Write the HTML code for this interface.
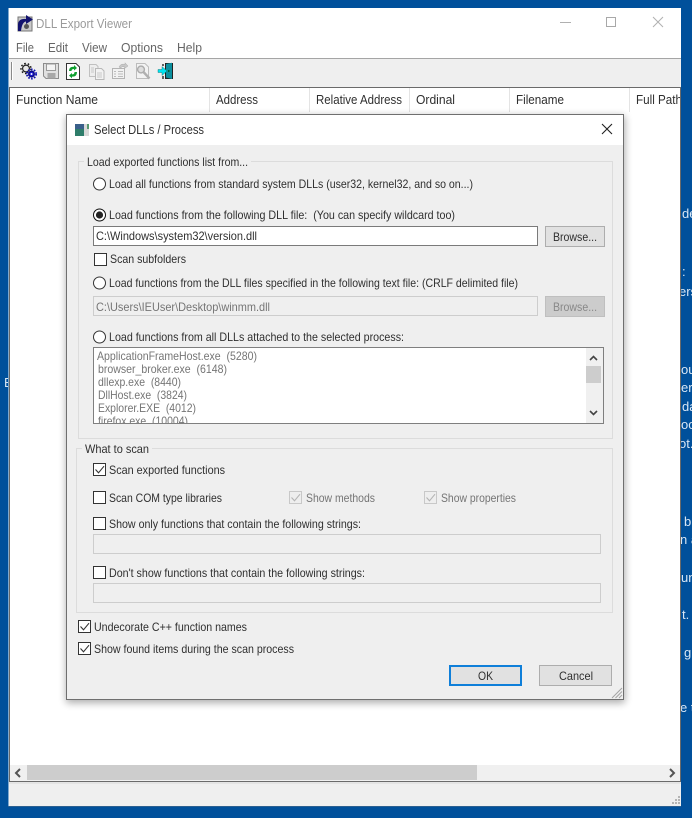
<!DOCTYPE html>
<html><head><meta charset="utf-8"><title>DLL Export Viewer</title>
<style>
html,body{margin:0;padding:0;background:#00509b;width:692px;height:818px;overflow:hidden}
svg{display:block}
text{font-family:"Liberation Sans",sans-serif;font-size:12px;white-space:pre;fill:#2f2f2f}
.g{fill:#757575}
.w{fill:#d8e6f4;font-size:13px}
.m{fill:#666;font-size:12.5px}
.box{fill:#fff;stroke:#333;stroke-width:1}
.dis{fill:#eee;stroke:#c8c8c8;stroke-width:1}
.ed{fill:#efefef;stroke:#cdcdcd;stroke-width:1}
.sep{stroke:#e4e4e4;stroke-width:1}
</style></head><body>
<svg width="692" height="818" viewBox="0 0 692 818" xmlns="http://www.w3.org/2000/svg">
<defs>
<filter id="sh" x="-10%" y="-10%" width="120%" height="120%"><feGaussianBlur stdDeviation="4"/></filter>
<clipPath id="lc"><rect x="94" y="348" width="492" height="75"/></clipPath>
<clipPath id="hc"><rect x="9" y="88" width="671" height="24"/></clipPath>
<clipPath id="rc"><rect x="681" y="0" width="11" height="818"/></clipPath>
<clipPath id="lf"><rect x="0" y="0" width="8" height="818"/></clipPath>
<path id="ck" d="M2.5 6.5 L5.5 9.8 L11 3.2" fill="none"/>
</defs>

<rect width="692" height="818" fill="#00509b"/>
<!-- bg fragments -->
<g clip-path="url(#rc)">
<text class="w" x="682" y="218">de</text>
<text class="w" x="682" y="276">:</text>
<text class="w" x="679" y="296">ers</text>
<text class="w" x="681" y="374">ou</text>
<text class="w" x="681" y="392">er</text>
<text class="w" x="682" y="411">da</text>
<text class="w" x="681" y="429">oo</text>
<text class="w" x="679" y="448">ot.</text>
<text class="w" x="684" y="526">b</text>
<text class="w" x="680" y="544">n a</text>
<text class="w" x="681" y="582">un</text>
<text class="w" x="682" y="619">t.</text>
<text class="w" x="684" y="657">g</text>
<text class="w" x="680" y="712">e t</text>
</g>
<g clip-path="url(#lf)"><text class="w" x="4" y="387">E</text></g>

<!-- window -->
<rect x="8.5" y="8" width="672.5" height="798.5" fill="#fff"/>
<rect x="9" y="58" width="672" height="1" fill="#a5a5a5"/>
<rect x="9" y="59" width="672" height="28" fill="#efefef"/>
<rect x="9" y="87" width="672" height="1" fill="#6a6a6a"/>
<rect x="680" y="87" width="1" height="694" fill="#6a6a6a"/>
<rect x="9" y="87" width="1" height="694" fill="#6a6a6a"/>
<rect x="9" y="781" width="672" height="25" fill="#efefef"/>
<rect x="9" y="781" width="672" height="1" fill="#6a6a6a"/>
<rect x="9" y="782" width="672" height="2" fill="#e4e4e4"/>
<rect x="8" y="806" width="673" height="1" fill="#2b5f90"/>

<!-- app icon -->
<g>
<rect x="18" y="17" width="14" height="14" fill="#c9c9c9" stroke="#777" stroke-width="1"/>
<path d="M18 31 L18 24 Q19 18 26 19 L26 15 L33 19.5 L26 24 L26 21.5 Q22 22 21 31 Z" fill="#12126e"/>
<circle cx="26.5" cy="26.5" r="2.5" fill="#555"/>
</g>
<text x="36" y="28" textLength="96" lengthAdjust="spacingAndGlyphs" style="fill:#9a9a9a;font-size:12.5px">DLL Export Viewer</text>

<!-- window controls -->
<rect x="560" y="22" width="11" height="1" fill="#b0b0b0"/>
<rect x="606.5" y="17.5" width="9" height="9" fill="none" stroke="#a8a8a8"/>
<path d="M653 17 L663 27 M663 17 L653 27" stroke="#b0b0b0" stroke-width="1" fill="none"/>

<!-- menu -->
<text class="m" x="16" y="52" textLength="18" lengthAdjust="spacingAndGlyphs">File</text>
<text class="m" x="48" y="52" textLength="20" lengthAdjust="spacingAndGlyphs">Edit</text>
<text class="m" x="82" y="52" textLength="25" lengthAdjust="spacingAndGlyphs">View</text>
<text class="m" x="121" y="52" textLength="42" lengthAdjust="spacingAndGlyphs">Options</text>
<text class="m" x="177" y="52" textLength="25" lengthAdjust="spacingAndGlyphs">Help</text>

<!-- toolbar -->
<rect x="11" y="62" width="1" height="18" fill="#8a8a8a"/>
<rect x="12" y="62" width="1" height="18" fill="#fff"/>
<!-- gears -->
<circle cx="26" cy="68.5" r="3.4" fill="#e8e8e8" stroke="#222" stroke-width="1.2"/>
<circle cx="26" cy="68.5" r="5" fill="none" stroke="#111" stroke-width="1.4" stroke-dasharray="1.6 2"/>
<circle cx="31.5" cy="74" r="2.8" fill="#1a1ad0" stroke="#0a0a80" stroke-width="1.4"/>
<circle cx="31.5" cy="74" r="4.6" fill="none" stroke="#1010b0" stroke-width="1.8" stroke-dasharray="1.6 1.4"/>
<circle cx="31.5" cy="74" r="1" fill="#fff"/>
<!-- floppy -->
<path d="M43.5 63.5 H58.5 V78.5 H46 L43.5 76 Z" fill="#e0e0e0" stroke="#8c8c8c"/>
<rect x="46.5" y="64" width="9" height="6.5" fill="#f4f4f4" stroke="#9a9a9a"/>
<rect x="47.5" y="73" width="8" height="5.5" fill="#a8a8a8"/>
<!-- refresh doc -->
<path d="M66.5 63.5 H76 L79.5 67 V79.5 H66.5 Z" fill="#fff" stroke="#333"/>
<path d="M69 71 Q69 66.5 74 66.8 L74 65 L77 68 L74 70.5 L74 69 Q71.5 69 71.5 71 Z" fill="#10a030"/>
<path d="M77 72 Q77 77 72 76.6 L72 78.4 L69 75.5 L72 73 L72 74.4 Q74.5 74.5 74.5 72 Z" fill="#10a030"/>
<!-- copy -->
<path d="M89.5 64.5 H96 L98 66.5 V76.5 H89.5 Z" fill="#eee" stroke="#c0c0c0"/>
<path d="M95.5 68.5 H101.5 L104 71 V79.5 H95.5 Z" fill="#f2f2f2" stroke="#b8b8b8"/>
<path d="M97 73 H102 M97 75 H102 M97 77 H102 M91 68 H94 M91 70 H94 M91 72 H94" stroke="#c8c8c8"/>
<!-- properties -->
<rect x="112.5" y="68.5" width="12" height="10" fill="#f2f2f2" stroke="#b4b4b4"/>
<path d="M114 71.5 H116 M118 71.5 H123 M114 74 H116 M118 74 H123 M114 76.5 H116 M118 76.5 H123" stroke="#bcbcbc"/>
<path d="M119 67 Q121 63 125 64.5 L125 62.8 L128 66 L124.5 68.5 L124.5 66.8 Q122 66 120.5 68 Z" fill="#c8c8c8" stroke="#aaa" stroke-width=".5"/>
<!-- search doc -->
<path d="M136.5 63.5 H145 L148.5 67 V78.5 H136.5 Z" fill="#f2f2f2" stroke="#bcbcbc"/>
<circle cx="141" cy="69.5" r="3.4" fill="#ddd" stroke="#ababab" stroke-width="1.4"/>
<path d="M143.5 72 L149.5 78.5" stroke="#b0b0b0" stroke-width="2.4"/>
<!-- exit -->
<rect x="165" y="63" width="8" height="16" fill="#222"/>
<path d="M166 64 L172 62.8 V79 L166 77.5 Z" fill="#0c8f9e"/>
<rect x="168" y="70" width="1.5" height="2" fill="#063"/>
<path d="M158 69.5 H162 V66.5 L167 71 L162 75.5 V72.5 H158 Z" fill="#00e4f0" stroke="#066" stroke-width=".4"/>
<path d="M163 64 V66 M163 76 V79" stroke="#222" stroke-width="1.4"/>

<!-- header -->
<g clip-path="url(#hc)">
<path class="sep" d="M209.5 88V112M309.5 88V112M409.5 88V112M509.5 88V112M629.5 88V112"/>
<text x="16" y="104" textLength="82" lengthAdjust="spacingAndGlyphs" style="font-size:12.5px">Function Name</text>
<text x="216" y="104" textLength="42" lengthAdjust="spacingAndGlyphs" style="font-size:12.5px">Address</text>
<text x="316" y="104" textLength="86" lengthAdjust="spacingAndGlyphs" style="font-size:12.5px">Relative Address</text>
<text x="416" y="104" textLength="39" lengthAdjust="spacingAndGlyphs" style="font-size:12.5px">Ordinal</text>
<text x="516" y="104" textLength="48" lengthAdjust="spacingAndGlyphs" style="font-size:12.5px">Filename</text>
<text x="636" y="104" textLength="46" lengthAdjust="spacingAndGlyphs" style="font-size:12.5px">Full Path</text>
</g>

<!-- h scrollbar -->
<rect x="10" y="765" width="670" height="16" fill="#f0f0f0"/>
<rect x="27" y="765" width="450" height="15" fill="#cdcdcd"/>
<path d="M20 769 L16 773 L20 777" fill="none" stroke="#555" stroke-width="2"/>
<path d="M670 769 L674 773 L670 777" fill="none" stroke="#555" stroke-width="2"/>
<!-- status grip -->
<g fill="#b4b4b4">
<rect x="678" y="796" width="2" height="2"/>
<rect x="675" y="799" width="2" height="2"/><rect x="678" y="799" width="2" height="2"/>
<rect x="672" y="802" width="2" height="2"/><rect x="675" y="802" width="2" height="2"/><rect x="678" y="802" width="2" height="2"/>
</g>

<!-- dialog -->
<rect x="66" y="116" width="559" height="587" fill="#000" opacity=".32" filter="url(#sh)"/>
<rect x="66.5" y="114.5" width="557" height="585" fill="#efefef" stroke="#6f6f6f"/>
<rect x="67" y="115" width="556" height="30" fill="#fff"/>
<rect x="75" y="124" width="9" height="12" fill="#2e7d6a"/>
<rect x="75" y="124" width="9" height="5" fill="#3a5f8a"/>
<rect x="84" y="124" width="5" height="12" fill="#d8d8d8"/>
<rect x="87" y="124" width="2" height="5" fill="#5a9a70"/>
<text x="94" y="134" textLength="110" lengthAdjust="spacingAndGlyphs" style="font-size:12.5px">Select DLLs / Process</text>
<path d="M602 124 L612 134 M612 124 L602 134" stroke="#222" stroke-width="1.1" fill="none"/>

<!-- group 1 -->
<path d="M84 161.5 H78.5 V438.5 H612.5 V161.5 H251" fill="none" stroke="#dcdcdc"/>
<text x="87" y="166" textLength="161" lengthAdjust="spacingAndGlyphs">Load exported functions list from...</text>

<circle cx="99.5" cy="184" r="6" fill="#fff" stroke="#333"/>
<text x="109" y="188" textLength="364" lengthAdjust="spacingAndGlyphs">Load all functions from standard system DLLs (user32, kernel32, and so on...)</text>

<circle cx="99.5" cy="215" r="6" fill="#fff" stroke="#0d0d0d"/>
<circle cx="99.5" cy="215" r="3.6" fill="#222"/>
<text x="109" y="219" textLength="346" lengthAdjust="spacingAndGlyphs">Load functions from the following DLL file:  (You can specify wildcard too)</text>

<rect x="93.5" y="226.5" width="444" height="19" fill="#fff" stroke="#7a7a7a"/>
<text x="96" y="240" textLength="161" lengthAdjust="spacingAndGlyphs">C:\Windows\system32\version.dll</text>
<rect x="545.5" y="226.5" width="59" height="20" fill="#e1e1e1" stroke="#adadad"/>
<text x="553" y="241" textLength="44" lengthAdjust="spacingAndGlyphs">Browse...</text>

<rect class="box" x="94.5" y="253.5" width="12" height="12"/>
<text x="110" y="263" textLength="76" lengthAdjust="spacingAndGlyphs">Scan subfolders</text>

<circle cx="99.5" cy="283" r="6" fill="#fff" stroke="#333"/>
<text x="109" y="287" textLength="409" lengthAdjust="spacingAndGlyphs">Load functions from the DLL files specified in the following text file: (CRLF delimited file)</text>

<rect class="ed" x="93.5" y="296.5" width="444" height="19"/>
<text class="g" x="96" y="311" textLength="174" lengthAdjust="spacingAndGlyphs">C:\Users\IEUser\Desktop\winmm.dll</text>
<rect x="545.5" y="296.5" width="59" height="20" fill="#ccc" stroke="#bfbfbf"/>
<text x="553" y="311" textLength="44" lengthAdjust="spacingAndGlyphs" style="fill:#888">Browse...</text>

<circle cx="99.5" cy="337" r="6" fill="#fff" stroke="#333"/>
<text x="109" y="341" textLength="295" lengthAdjust="spacingAndGlyphs">Load functions from all DLLs attached to the selected process:</text>

<rect x="93.5" y="347.5" width="510" height="76" fill="#fff" stroke="#7f7f7f"/>
<rect x="586" y="348" width="17" height="75" fill="#f0f0f0"/>
<rect x="586" y="366" width="15" height="17" fill="#cdcdcd"/>
<path d="M590 360 L593.5 356.5 L597 360" fill="none" stroke="#444" stroke-width="1.6"/>
<path d="M590 411 L593.5 414.5 L597 411" fill="none" stroke="#444" stroke-width="1.6"/>
<g clip-path="url(#lc)">
<text class="g" x="97" y="360" textLength="160" lengthAdjust="spacingAndGlyphs">ApplicationFrameHost.exe  (5280)</text>
<text class="g" x="98" y="373" textLength="129" lengthAdjust="spacingAndGlyphs">browser_broker.exe  (6148)</text>
<text class="g" x="98" y="386" textLength="83" lengthAdjust="spacingAndGlyphs">dllexp.exe  (8440)</text>
<text class="g" x="98" y="399" textLength="89" lengthAdjust="spacingAndGlyphs">DllHost.exe  (3824)</text>
<text class="g" x="98" y="412" textLength="98" lengthAdjust="spacingAndGlyphs">Explorer.EXE  (4012)</text>
<text class="g" x="98" y="425" textLength="90" lengthAdjust="spacingAndGlyphs">firefox.exe  (10004)</text>
</g>

<!-- group 2 -->
<path d="M82 448.5 H76.5 V612.5 H612.5 V448.5 H152" fill="none" stroke="#dcdcdc"/>
<text x="85" y="453" textLength="64" lengthAdjust="spacingAndGlyphs">What to scan</text>

<rect class="box" x="93.5" y="463.5" width="12" height="12"/>
<use href="#ck" x="93" y="463" stroke="#333" stroke-width="1.1"/>
<text x="109" y="474" textLength="116" lengthAdjust="spacingAndGlyphs">Scan exported functions</text>

<rect class="box" x="93.5" y="491.5" width="12" height="12"/>
<text x="109" y="502" textLength="113" lengthAdjust="spacingAndGlyphs">Scan COM type libraries</text>

<rect class="dis" x="289.5" y="491.5" width="12" height="12"/>
<use href="#ck" x="289" y="491" stroke="#b4b4b4" stroke-width="1.1"/>
<text class="g" x="306" y="502" textLength="69" lengthAdjust="spacingAndGlyphs">Show methods</text>
<rect class="dis" x="424.5" y="491.5" width="12" height="12"/>
<use href="#ck" x="424" y="491" stroke="#b4b4b4" stroke-width="1.1"/>
<text class="g" x="441" y="502" textLength="75" lengthAdjust="spacingAndGlyphs">Show properties</text>

<rect class="box" x="93.5" y="517.5" width="12" height="12"/>
<text x="109" y="528" textLength="252" lengthAdjust="spacingAndGlyphs">Show only functions that contain the following strings:</text>
<rect class="ed" x="93.5" y="534.5" width="507" height="19"/>

<rect class="box" x="93.5" y="566.5" width="12" height="12"/>
<text x="109" y="577" textLength="256" lengthAdjust="spacingAndGlyphs">Don't show functions that contain the following strings:</text>
<rect class="ed" x="93.5" y="583.5" width="507" height="19"/>

<rect class="box" x="78.5" y="620.5" width="12" height="12"/>
<use href="#ck" x="78" y="620" stroke="#333" stroke-width="1.1"/>
<text x="94" y="631" textLength="153" lengthAdjust="spacingAndGlyphs">Undecorate C++ function names</text>
<rect class="box" x="78.5" y="642.5" width="12" height="12"/>
<use href="#ck" x="78" y="642" stroke="#333" stroke-width="1.1"/>
<text x="94" y="653" textLength="200" lengthAdjust="spacingAndGlyphs">Show found items during the scan process</text>

<!-- buttons -->
<rect x="450" y="666" width="71" height="19" fill="#e1e1e1" stroke="#0f7fd9" stroke-width="2"/>
<text x="478" y="680" textLength="15" lengthAdjust="spacingAndGlyphs">OK</text>
<rect x="539.5" y="665.5" width="72" height="20" fill="#e1e1e1" stroke="#adadad"/>
<text x="559" y="680" textLength="34" lengthAdjust="spacingAndGlyphs">Cancel</text>

<!-- dialog grip -->
<path d="M612 698 L622 688 M615.5 698 L622 691.5 M619 698 L622 695" stroke="#a4a4a4" stroke-width="1" fill="none"/>
</svg>
</body></html>
